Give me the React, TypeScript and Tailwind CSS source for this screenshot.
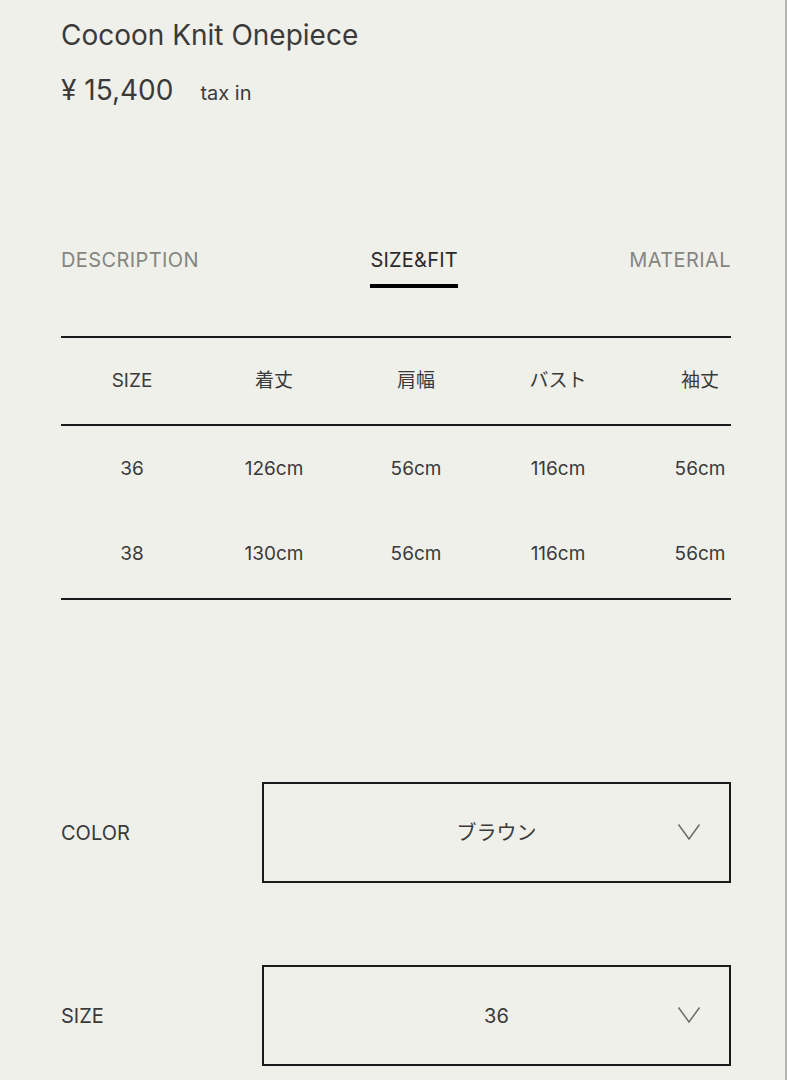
import { ReactNode } from "react"

const headers = ["SIZE", "着丈", "肩幅", "バスト", "袖丈"]
const rows = [
  ["36", "126cm", "56cm", "116cm", "56cm"],
  ["38", "130cm", "56cm", "116cm", "56cm"],
]

function Chevron() {
  return (
    <svg width="24" height="18" viewBox="0 0 24 18" fill="none" className="text-[#6b6b68]">
      <path d="M1.5 1.5 L12 16 L22.5 1.5" stroke="currentColor" strokeWidth="1.5" />
    </svg>
  )
}

function SelectRow({ label, value, className }: { label: string; value: ReactNode; className?: string }) {
  return (
    <div className={"flex items-center " + (className ?? "")}>
      <div className="w-[201px] text-[20px] text-[#3a3a3a]">{label}</div>
      <div className="relative flex h-[101px] flex-1 items-center justify-center border-2 border-[#1a1a1a]">
        <span className="text-[20px] text-[#3a3a3a]">{value}</span>
        <div className="absolute right-[28px] top-[39px]">
          <Chevron />
        </div>
      </div>
    </div>
  )
}

export default function App() {
  return (
    <div
      className="min-h-screen w-full bg-[#f0f0eb] border-r-2 border-[#b4b4b0]"
      style={{ fontFamily: 'Inter, "Noto Sans CJK JP", sans-serif' }}
    >
      <div className="ml-[61px] w-[670px] pt-[16px]">
        {/* Title & price */}
        <h1 className="text-[28px] leading-[38px] text-[#3a3a3a]">Cocoon Knit Onepiece</h1>
        <div className="mt-[18px] flex items-baseline">
          <span className="text-[28px] leading-[36px] text-[#3a3a3a]">¥ 15,400</span>
          <span className="ml-[27px] text-[20px] text-[#3a3a3a]">tax in</span>
        </div>

        {/* Tabs */}
        <div className="mt-[138px] flex justify-between">
          <span className="text-[20px] leading-[28px] tracking-[0.4px] text-[#858581]">DESCRIPTION</span>
          <div className="flex flex-col items-center">
            <span className="text-[20px] leading-[28px] tracking-[0.2px] text-[#2a2a2a]">SIZE&amp;FIT</span>
            <div className="mt-[10px] h-[4px] w-full bg-black" />
          </div>
          <span className="text-[20px] leading-[28px] tracking-[0.4px] text-[#858581]">MATERIAL</span>
        </div>

        {/* Size table */}
        <div className="mt-[48px] border-y-2 border-[#1a1a1a]">
          <div className="border-b-2 border-[#1a1a1a]">
            <div className="grid w-[710px] grid-cols-5">
              {headers.map((h) => (
                <div key={h} className="flex h-[86px] items-center justify-center text-[19px] text-[#3a3a3a]">
                  {h}
                </div>
              ))}
            </div>
          </div>
          <div className="w-[710px] py-[1px]">
            {rows.map((r) => (
              <div key={r[0]} className="grid grid-cols-5">
                {r.map((c, i) => (
                  <div key={i} className="flex h-[85px] items-center justify-center text-[19px] text-[#3a3a3a]">
                    {c}
                  </div>
                ))}
              </div>
            ))}
          </div>
        </div>

        {/* Selects */}
        <SelectRow label="COLOR" value="ブラウン" className="mt-[182px]" />
        <SelectRow label="SIZE" value="36" className="mt-[82px]" />
      </div>
    </div>
  )
}
